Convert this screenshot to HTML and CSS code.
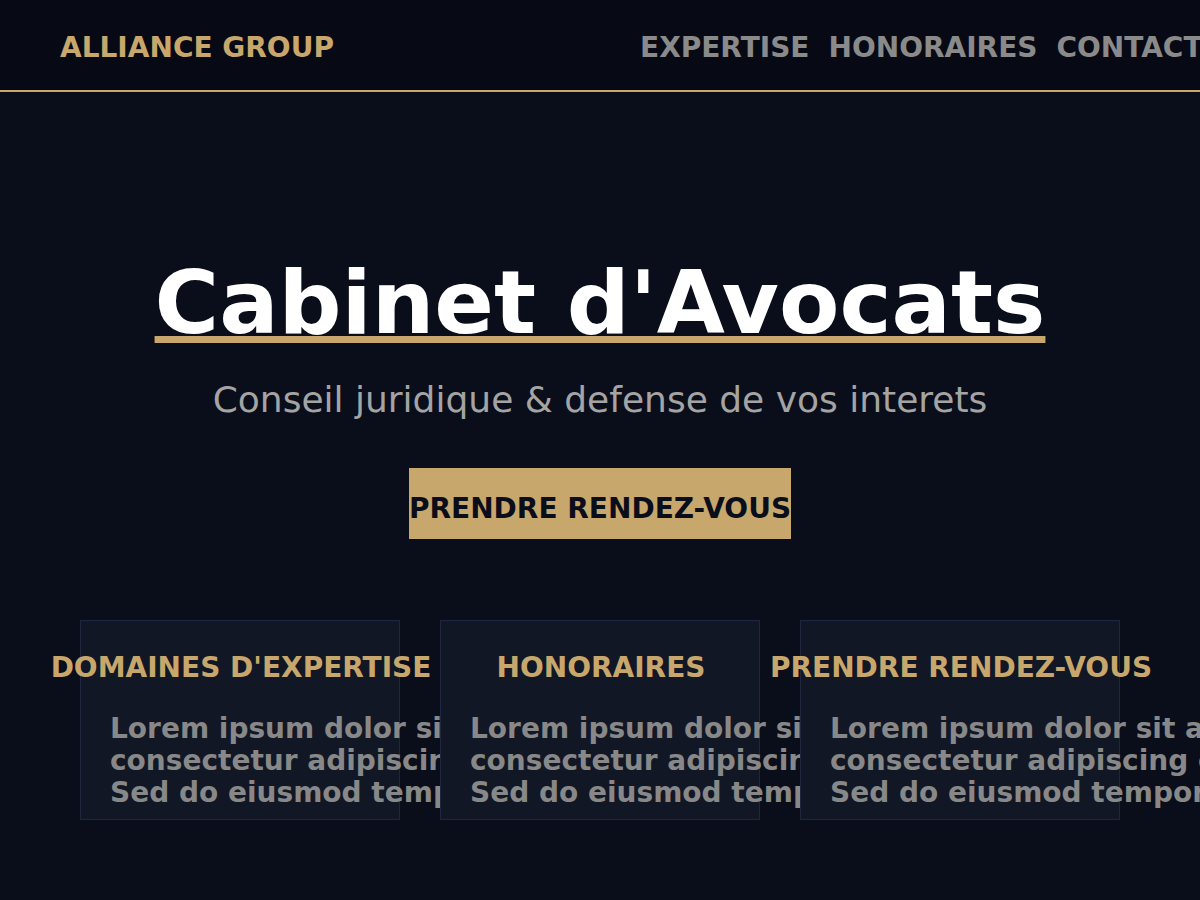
FILE: index.html
```html
<!DOCTYPE html>
<html lang="fr">
<head>
<meta charset="utf-8">
<title>Alliance Group - Cabinet d'Avocats</title>
<link rel="stylesheet" href="styles.css">
</head>
<body>
<header class="site-header">
  <div class="brand">ALLIANCE GROUP</div>
  <nav class="nav">
    <a class="nav-link" href="#expertise">EXPERTISE</a>
    <a class="nav-link" href="#honoraires">HONORAIRES</a>
    <a class="nav-link" href="#contact">CONTACT</a>
  </nav>
</header>
<main class="hero">
  <h1 class="hero-title">Cabinet d'Avocats</h1>
  <p class="hero-subtitle">Conseil juridique &amp; defense de vos interets</p>
  <a class="cta" href="#rdv">PRENDRE RENDEZ-VOUS</a>
  <section class="cards">
    <div class="card">
      <h2 class="card-title">DOMAINES D'EXPERTISE</h2>
      <p class="card-text"><span class="line">Lorem ipsum dolor sit amet,</span><span class="line">consectetur adipiscing elit.</span><span class="line">Sed do eiusmod tempor incididunt.</span></p>
    </div>
    <div class="card">
      <h2 class="card-title">HONORAIRES</h2>
      <p class="card-text"><span class="line">Lorem ipsum dolor sit amet,</span><span class="line">consectetur adipiscing elit.</span><span class="line">Sed do eiusmod tempor incididunt.</span></p>
    </div>
    <div class="card">
      <h2 class="card-title">PRENDRE RENDEZ-VOUS</h2>
      <p class="card-text"><span class="line">Lorem ipsum dolor sit amet,</span><span class="line">consectetur adipiscing elit.</span><span class="line">Sed do eiusmod tempor incididunt.</span></p>
    </div>
  </section>
</main>
</body>
</html>
```
FILE: styles.css
```css
html, body {
  margin: 0;
  padding: 0;
  overflow-x: hidden;
}
body {
  background: #0a0e1a;
  font-family: "DejaVu Sans", "Noto Sans", sans-serif;
  color: #ffffff;
}
.site-header {
  height: 59px;
  background: #070a15;
  border-bottom: 2px solid #c8a76c;
  display: grid;
  grid-template-columns: 580px max-content;
  align-items: start;
  padding: 31px 0 0 60px;
}
.brand {
  color: #c8a76c;
  font-weight: bold;
  font-size: 28px;
  line-height: normal;
  white-space: nowrap;
}
.nav {
  display: flex;
  gap: 19px;
  white-space: nowrap;
}
.nav-link {
  color: #8a8a8a;
  text-decoration: none;
  font-weight: bold;
  font-size: 28px;
  line-height: normal;
}
.hero {
  display: flex;
  flex-direction: column;
  align-items: center;
  padding-top: 158px;
}
.hero-title {
  margin: 0;
  font-size: 88px;
  line-height: 1.2;
  font-weight: bold;
  color: #ffffff;
  text-decoration: underline;
  text-decoration-color: #c8a76c;
  text-decoration-thickness: 7px;
  text-underline-offset: 3px;
  text-decoration-skip-ink: none;
  white-space: nowrap;
}
.hero-subtitle {
  margin: 22px 0 0;
  font-size: 36px;
  line-height: 1.2;
  color: #a4a4a4;
  white-space: nowrap;
}
.cta {
  margin-top: 47px;
  display: block;
  background: #c8a76c;
  color: #0a0e1a;
  text-decoration: none;
  font-weight: bold;
  font-size: 28px;
  line-height: 33px;
  padding: 24px 0 14px;
  white-space: nowrap;
}
.cards {
  margin-top: 81px;
  display: flex;
  gap: 40px;
}
.card {
  position: relative;
  width: 320px;
  height: 200px;
  box-sizing: border-box;
  background: #121725;
  border: 1px solid #1f2640;
  padding: 30px 0 0 29px;
}
.card-title {
  margin: 0 0 0 -29px;
  width: 320px;
  display: flex;
  justify-content: center;
  white-space: nowrap;
  color: #c8a76c;
  font-weight: bold;
  font-size: 28px;
  line-height: 1.2;
}
.card-text {
  margin: 29px 0 0;
  color: #888888;
  font-weight: bold;
  font-size: 28px;
  line-height: 32px;
}
.line {
  display: block;
  white-space: nowrap;
}
```
